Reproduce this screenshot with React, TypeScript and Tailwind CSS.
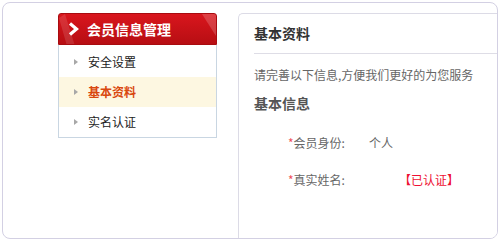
import React from 'react';

const menu = [
  { label: '安全设置', active: false },
  { label: '基本资料', active: true },
  { label: '实名认证', active: false },
];

const font = { fontFamily: '"Noto Sans CJK SC", "Noto Sans", sans-serif' };

const Sidebar = () => (
  <div className="w-[159px] shrink-0">
    {/* red header */}
    <div className="relative h-[32px] flex items-center rounded-t-[3px] border border-[#a80c10] bg-gradient-to-b from-[#d9161d] to-[#b70e13] overflow-hidden">
      <svg className="absolute left-0 top-0" width="20" height="32" viewBox="0 0 20 32">
        <polygon points="0,4 6,0 16,32 8,32" fill="#ffffff" opacity="0.12" />
      </svg>
      <svg className="absolute right-0 top-0" width="20" height="32" viewBox="0 0 20 32">
        <polygon points="6,0 20,0 20,22" fill="#ffffff" opacity="0.18" />
      </svg>
      <svg className="relative ml-[9px]" width="12" height="14" viewBox="0 0 12 14">
        <polyline points="2,1.5 8.5,7 2,12.5" fill="none" stroke="#ffffff" strokeWidth="3.2" />
      </svg>
      <span className="relative ml-[7px] text-[14px] font-bold text-white leading-none">会员信息管理</span>
    </div>
    {/* menu list */}
    <div className="border border-t-0 border-[#c9d6e2] bg-white pt-[2px]">
      {menu.map((m) => (
        <div
          key={m.label}
          className={`h-[30px] flex items-center pl-[15px] ${m.active ? 'bg-[#fdf7e1]' : ''}`}
        >
          <svg width="4" height="6" viewBox="0 0 4 6">
            <polygon points="0,0 4,3 0,6" fill="#a8a8a8" />
          </svg>
          <span
            className={`ml-[10px] text-[12px] leading-none ${m.active ? 'font-bold text-[#d9480f]' : 'text-[#222]'}`}
          >
            {m.label}
          </span>
        </div>
      ))}
    </div>
  </div>
);

const Panel = () => (
  <div className="flex-1 min-w-[262px] h-[300px] rounded-tl-[5px] border-l border-t border-[#dcdbe6] bg-white pl-[15px]">
    <div className="h-[40px] flex items-center border-b border-[#dedde6]">
      <span className="text-[14px] font-semibold text-[#333]">基本资料</span>
    </div>
    <div className="mt-[13px] text-[12px] leading-[16px] text-[#666]">请完善以下信息,方便我们更好的为您服务</div>
    <div className="mt-[11px] text-[14px] font-semibold leading-[18px] text-[#555]">基本信息</div>

    <div className="mt-[23px] pl-[34px] flex flex-col gap-[21px] text-[12px] leading-[16px]">
      <div className="flex">
        <span className="w-[81px] text-[#666]">
          <span className="text-[#f0505a]">*</span>会员身份:
        </span>
        <span className="text-[#666]">个人</span>
      </div>
      <div className="flex">
        <span className="w-[81px] text-[#666]">
          <span className="text-[#f0505a]">*</span>真实姓名:
        </span>
        <span className="ml-[30px] text-[#ee1133]">【已认证】</span>
      </div>
    </div>
  </div>
);

export default function App() {
  return (
    <div className="w-[500px] h-[240px] bg-white p-[2px]" style={font}>
      <div className="w-[496px] h-[237px] rounded-[8px] border border-[#d3d0e3] overflow-hidden flex pt-[10px] pl-[55px] gap-[21px]">
        <Sidebar />
        <Panel />
      </div>
    </div>
  );
}
